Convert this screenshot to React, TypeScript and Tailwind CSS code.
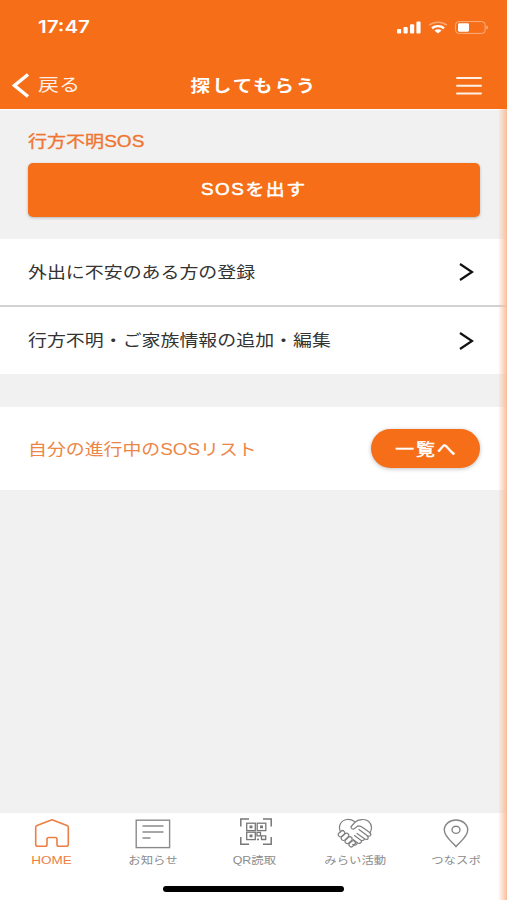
import type { ReactNode } from 'react'

function BackIcon() {
  return (
    <svg width="18" height="25" viewBox="0 0 18 25" fill="none" stroke="#fff" strokeWidth="3.4">
      <path d="M16 1.5 2.5 12.5 16 23.5" />
    </svg>
  )
}

function ChevronIcon() {
  return (
    <svg width="16" height="18" viewBox="0 0 16 18" fill="none" stroke="#111" strokeWidth="2.2">
      <path d="M1 1 13 9 1 17" />
    </svg>
  )
}

function MenuIcon() {
  return (
    <svg width="26" height="19" viewBox="0 0 26 19" stroke="#fff" strokeOpacity="0.9" strokeWidth="2" strokeLinecap="round">
      <path d="M1 2h24M1 9.8h24M1 17.5h24" />
    </svg>
  )
}

function SignalIcon() {
  return (
    <svg width="24" height="13" viewBox="0 0 24 13" fill="#fff">
      <rect x="0" y="8" width="4.2" height="4.5" rx="1" />
      <rect x="6.5" y="6" width="4.2" height="6.5" rx="1" />
      <rect x="13" y="3.3" width="4.2" height="9.2" rx="1" />
      <rect x="19.4" y="0.5" width="4.2" height="12" rx="1" />
    </svg>
  )
}

function WifiIcon() {
  return (
    <svg width="20" height="13" viewBox="0 0 20 13" fill="none" stroke="#fff">
      <path d="M1.2 4.2C6 .2 14 .2 18.8 4.2" strokeWidth="1.6" strokeOpacity="0.4" />
      <path d="M4 7.2c3.4-2.8 8.6-2.8 12 0" strokeWidth="2.4" />
      <path d="M6.4 9.4c2-1.6 5.200-1.600 7.200 0L10 12.600z" fill="#fff" stroke="none" />
    </svg>
  )
}

function BatteryIcon() {
  return (
    <svg width="34" height="13" viewBox="0 0 34 13" fill="none">
      <rect x="0.6" y="0.6" width="29.5" height="11.8" rx="3" stroke="#fff" strokeOpacity="0.45" />
      <rect x="3" y="2.3" width="11" height="8.4" rx="1.4" fill="#fff" />
      <path d="M31.3 4.5c2.5 1 2.5 3 0 4z" fill="#fff" fillOpacity="0.45" />
    </svg>
  )
}

function HomeIcon() {
  return (
    <svg width="36" height="30" viewBox="0 0 36 30" fill="none" stroke="#ec7f43" strokeWidth="1.6" strokeLinejoin="round">
      <path d="M18 .8 33 6.5q1.3.6 1.3 2V25.3q0 2-2 2h-7.5q-1.8 0-1.8-1.8V20.300q0-1.800-1.800-1.800h-6.400q-1.800 0-1.800 1.800v5.200q0 1.800-1.800 1.800H3.700q-2 0-2-2V8.500q0-1.400 1.300-2z" />
    </svg>
  )
}

function NewsIcon() {
  return (
    <svg width="36" height="30" viewBox="0 0 36 30" fill="none" stroke="#8a8a8a" strokeWidth="1.4">
      <rect x="1.2" y="1.2" width="33.4" height="27.4" />
      <path d="M7.5 7h21M7.5 13h21M7.5 19h8" />
    </svg>
  )
}

function QrIcon() {
  return (
    <svg width="32" height="28" viewBox="0 0 32 28" fill="none" stroke="#777" strokeWidth="1.3">
      <path d="M.8 8.5V1H9M23 1h8.2v7.5M31.2 19v7.3H23M9 26.3H.8V19" strokeWidth="1.5" />
      <rect x="6.7" y="5.2" width="8.6" height="7.4" />
      <rect x="17.2" y="5.2" width="8.6" height="7.4" />
      <rect x="6.7" y="14.2" width="8.6" height="7.4" />
      <path d="M9.5 8.9h3M20 8.9h3M9.5 17.9h3" strokeWidth="2.8" />
      <path d="M17 14.4h3.5v3.5H17zM20.5 17.9H22M21.5 17.9h4.200v3.600h-4.200zM17 21.500h2" />
    </svg>
  )
}

function HandshakeIcon() {
  return (
    <svg width="36" height="31" viewBox="0 0 36 31" fill="none" stroke="#808080" strokeWidth="1.2" strokeLinecap="round" strokeLinejoin="round">
      <path d="M3.6 14C.8 9 3.5 2 10 1.500c3-.2 5.500.5 7.500 2" />
      <path d="M14.2 8.500 18.300 4c2.600-2.600 9.700-3.800 13.400-.5 3.500 3.200 3.500 8 1.200 11.500" />
      <path d="M14.200 8.500c-.8 2.200 1.800 3.200 3.400 2l3.200-2.600c2.400 0 4 .8 6 2.300l5.900 4.300c2.600 2.200.3 4.500-2.400 3.300" />
      <path d="m22 11.500 8 6.100c2.700 2.500.2 5-2.500 3.200L20 15.500" />
      <path d="m17.500 17.500 7 5.200c1.800-.1 3-.6 3-1.900M24.500 22.700c.2 2.600-2.500 3.300-4.300 2l-3.800-3" />
      <path d="M20.200 24.700c.3 2.300-2.500 3.200-4.500 1.600" />
      <rect x="1" y="13.5" width="7" height="4.4" rx="2.2" transform="rotate(-42 4.5 15.7)" />
      <rect x="3.7" y="16.6" width="8.6" height="4.4" rx="2.2" transform="rotate(-42 8 18.8)" />
      <rect x="7.6" y="20" width="8" height="4.4" rx="2.2" transform="rotate(-42 11.6 22.2)" />
      <rect x="11.7" y="23.6" width="7" height="4.4" rx="2.2" transform="rotate(-42 15.2 25.8)" />
    </svg>
  )
}

function PinIcon() {
  return (
    <svg width="26" height="29" viewBox="0 0 26 29" fill="none" stroke="#858585" strokeWidth="1.4">
      <path d="M13 27.5C10 23.5 1.3 18 1.3 11 1.3 5.3 6.5 1 13 1s11.7 4.300 11.700 10c0 7-8.700 12.500-11.700 16.500z" />
      <ellipse cx="13" cy="10.8" rx="4" ry="3.6" />
    </svg>
  )
}

const tabs: { label: string; icon: ReactNode; active?: boolean }[] = [
  { label: 'HOME', icon: <HomeIcon />, active: true },
  { label: 'お知らせ', icon: <NewsIcon /> },
  { label: 'QR読取', icon: <div className="pb-[3px] pl-[5px]"><QrIcon /></div> },
  { label: 'みらい活動', icon: <HandshakeIcon /> },
  { label: 'つなスポ', icon: <PinIcon /> },
]

const links = ['外出に不安のある方の登録', '行方不明・ご家族情報の追加・編集']

export default function App() {
  return (
    <div className="relative flex h-[900px] w-[507px] flex-col overflow-hidden bg-[#f1f1f1] font-['Liberation_Sans','Noto_Sans_CJK_JP',sans-serif] text-base leading-6">
      {/* Header */}
      <header className="h-[109px] shrink-0 bg-[#f66e18] text-white">
        <div className="flex h-[54px] items-center justify-between pr-[18px] pl-[38px]">
          <span className="origin-left scale-x-[1.21] font-['Inter',sans-serif] text-[17px] font-semibold">17:47</span>
          <div className="flex items-center gap-[7px]">
            <SignalIcon />
            <WifiIcon />
            <BatteryIcon />
          </div>
        </div>
        <div className="grid h-[62px] grid-cols-3 items-center pr-[25px] pl-3">
          <div className="flex items-center gap-2">
            <BackIcon />
            <span className="origin-left scale-x-[1.2] text-[17.5px] opacity-90">戻る</span>
          </div>
          <h1 className="origin-center scale-x-[1.18] pt-px pl-[11px] text-center text-[16.5px] font-bold tracking-[1.6px] whitespace-nowrap">探してもらう</h1>
          <div className="flex justify-end">
            <MenuIcon />
          </div>
        </div>
      </header>

      {/* SOS */}
      <section className="h-[130px] shrink-0 border-t border-white px-7 pt-5">
        <h2 className="origin-left scale-x-[1.19] text-[#ef7530] [-webkit-text-stroke:0.3px_#ef7530]">行方不明SOS</h2>
        <button className="mt-[9px] flex h-[54px] w-[452px] items-center justify-center rounded-[5px] bg-[#f66e18] text-white shadow-[0_1px_3px_rgba(0,0,0,0.25)]">
          <span className="scale-x-[1.18] tracking-[1.3px] [-webkit-text-stroke:0.5px_#fff]">SOSを出す</span>
        </button>
      </section>

      {/* Links */}
      <div className="shrink-0 divide-y-2 divide-[#d2d2d2] bg-white">
        {links.map((label) => (
          <a key={label} className="flex h-[67.5px] items-center justify-between pt-px pr-8 pl-7">
            <span className="origin-left scale-x-[1.183] pt-px text-[#333]">{label}</span>
            <ChevronIcon />
          </a>
        ))}
      </div>

      {/* My SOS list */}
      <section className="mt-[33px] flex h-[83px] shrink-0 items-center justify-between bg-white pr-[27px] pl-7">
        <span className="origin-left scale-x-[1.18] pt-[2px] text-[#ec8647]">自分の進行中のSOSリスト</span>
        <button className="flex h-[39px] w-[109px] items-center justify-center rounded-full bg-[#f66e18] text-white shadow-[0_1px_4px_rgba(0,0,0,0.25)]">
          <span className="scale-x-[1.18] pt-[2px] pl-px tracking-[1.5px] [-webkit-text-stroke:0.5px_#fff]">一覧へ</span>
        </button>
      </section>

      {/* Bottom tabs */}
      <nav className="mt-auto h-[87px] shrink-0 bg-white">
        <div className="grid h-[72.5px] grid-cols-5 pl-px">
          {tabs.map((tab) => (
            <div key={tab.label} className="flex flex-col items-center pt-[5px]">
              <div className="flex h-[31px] items-center">{tab.icon}</div>
              <span
                className={
                  tab.active
                    ? 'mt-[3px] scale-x-[1.23] text-[11px] leading-4 whitespace-nowrap text-[#ec7f43]'
                    : 'mt-[3px] scale-x-[1.18] text-[10.5px] leading-4 whitespace-nowrap text-[#8c8c8c]'
                }
              >
                {tab.label}
              </span>
            </div>
          ))}
        </div>
        <div className="mx-auto h-[6px] w-[181px] rounded-full bg-black" />
      </nav>

      {/* Edge glow */}
      <div className="absolute top-[109px] right-0 bottom-0 w-[9px] bg-gradient-to-r from-transparent to-[#f9bd9b]" />
    </div>
  )
}
